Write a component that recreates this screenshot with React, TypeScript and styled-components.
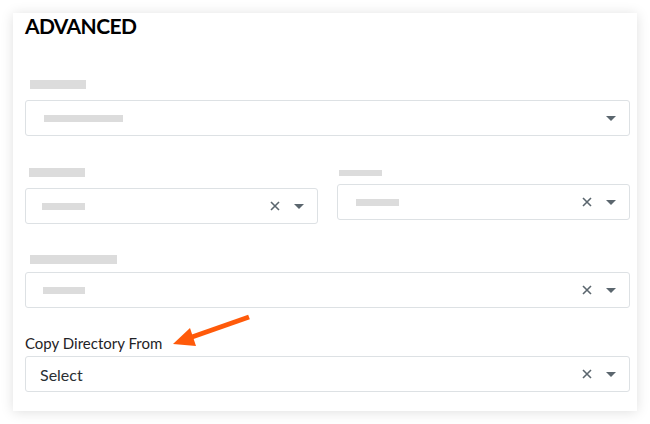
import React from 'react';
import styled, { createGlobalStyle } from 'styled-components';

const GlobalStyle = createGlobalStyle`
  html, body {
    margin: 0;
    padding: 0;
    background: #ffffff;
    font-family: Lato, "Open Sans", sans-serif;
  }
`;

const Card = styled.section`
  position: relative;
  margin: 13px;
  width: 624px;
  box-sizing: border-box;
  padding: 0 7px 19px 12px;
  background: #ffffff;
  box-shadow: 0 1px 12px rgba(0, 0, 0, 0.13);
`;

const Heading = styled.h2`
  margin: 0 0 41px;
  font-size: 21px;
  line-height: 26px;
  font-weight: 700;
  color: #000000;
  letter-spacing: -0.6px;
`;

const Form = styled.div`
  display: flex;
  flex-direction: column;
`;

const Row = styled.div<{ $gap?: number }>`
  display: grid;
  grid-template-columns: 1fr 1fr;
  column-gap: 19px;
  align-items: start;
  margin-bottom: ${p => p.$gap ?? 0}px;
`;

const Field = styled.div<{ $top?: number; $gap?: number }>`
  display: flex;
  flex-direction: column;
  margin-top: ${p => p.$top ?? 0}px;
  margin-bottom: ${p => p.$gap ?? 0}px;
`;

const LabelBar = styled.div<{ $w: number; $h?: number; $left?: number; $below?: number }>`
  width: ${p => p.$w}px;
  height: ${p => p.$h ?? 9}px;
  margin-left: ${p => p.$left ?? 5}px;
  margin-bottom: ${p => p.$below ?? 11}px;
  background: #dcdcdc;
`;

const Label = styled.div`
  font-size: 15px;
  line-height: 18px;
  color: #1f2326;
  margin-bottom: 4px;
`;

const SelectBox = styled.div`
  display: flex;
  align-items: center;
  height: 36px;
  box-sizing: border-box;
  padding: 0 13px 0 17px;
  border: 1px solid #dde1e4;
  border-radius: 3px;
  background: #ffffff;
`;

const Placeholder = styled.div<{ $w: number; $left?: number }>`
  width: ${p => p.$w}px;
  height: 7px;
  margin-left: ${p => p.$left ?? 0}px;
  background: #dcdcdc;
`;

const Value = styled.span`
  font-size: 16px;
  color: #2a2f33;
  margin-left: -3px;
`;

const Spacer = styled.div`
  flex: 1;
`;

const Icons = styled.div`
  display: flex;
  align-items: center;
  gap: 14px;
  color: #5b666e;
`;

const Arrow = styled.svg`
  position: absolute;
  left: 152px;
  top: 297px;
`;

const ClearIcon = () => (
  <svg width="10" height="10" viewBox="0 0 10 10">
    <path d="M1 1 L9 9 M9 1 L1 9" stroke="currentColor" strokeWidth="1.6" />
  </svg>
);

const CaretIcon = () => (
  <svg width="10" height="5" viewBox="0 0 10 5">
    <path d="M0 0 H10 L5 5 Z" fill="currentColor" />
  </svg>
);

interface SelectProps {
  clearable?: boolean;
  children?: React.ReactNode;
}

const Select: React.FC<SelectProps> = ({ clearable = true, children }) => (
  <SelectBox>
    {children}
    <Spacer />
    <Icons>
      {clearable && <ClearIcon />}
      <CaretIcon />
    </Icons>
  </SelectBox>
);

const App: React.FC = () => (
  <>
    <GlobalStyle />
    <Card>
      <Heading>ADVANCED</Heading>
      <Form>
        <Field $gap={32}>
          <LabelBar $w={56} />
          <Select clearable={false}>
            <Placeholder $w={79} $left={1} />
          </Select>
        </Field>

        <Row $gap={31}>
          <Field>
            <LabelBar $w={56} $left={4} />
            <Select>
              <Placeholder $w={43} $left={-1} />
            </Select>
          </Field>
          <Field $top={2}>
            <LabelBar $w={43} $h={6} $left={2} $below={8} />
            <Select>
              <Placeholder $w={43} $left={1} />
            </Select>
          </Field>
        </Row>

        <Field $gap={26}>
          <LabelBar $w={87} $below={8} />
          <Select>
            <Placeholder $w={42} />
          </Select>
        </Field>

        <Field>
          <Label>Copy Directory From</Label>
          <Select>
            <Value>Select</Value>
          </Select>
        </Field>
      </Form>

      <Arrow width="90" height="42" viewBox="0 0 90 42">
        <path d="M84 7 L27 27" stroke="#ff5a0a" strokeWidth="5" />
        <path d="M8 34 L31 36 L25 18 Z" fill="#ff5a0a" />
      </Arrow>
    </Card>
  </>
);

export default App;
